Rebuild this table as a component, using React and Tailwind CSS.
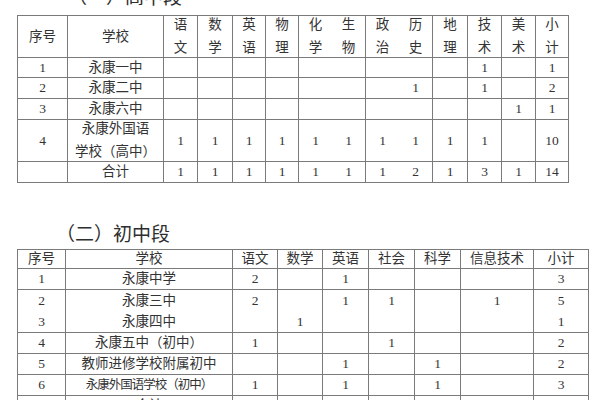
import React from 'react';

const T1_WIDTHS = [50, 96, 34, 35, 33, 33, 33, 34, 33, 34, 35, 34, 34, 33];
const T1_SUBJECTS = [
  ['语', '文'], ['数', '学'], ['英', '语'], ['物', '理'], ['化', '学'], ['生', '物'],
  ['政', '治'], ['历', '史'], ['地', '理'], ['技', '术'], ['美', '术'], ['小', '计'],
];
// columns whose right line is missing in the scan (化学|生物, 政治|历史)
const T1_OPEN = [6, 8];

const T1_ROWS = [
  { no: '1', school: ['永康一中'], h: 'h-[20px]', vals: ['', '', '', '', '', '', '', '', '', '1', '', '1'] },
  { no: '2', school: ['永康二中'], h: 'h-[21px]', vals: ['', '', '', '', '', '', '', '1', '', '1', '', '2'] },
  { no: '3', school: ['永康六中'], h: 'h-[21px]', vals: ['', '', '', '', '', '', '', '', '', '', '1', '1'] },
  { no: '4', school: ['永康外国语', '学校（高中）'], h: 'h-[41px]', vals: ['1', '1', '1', '1', '1', '1', '1', '1', '1', '1', '', '10'] },
  { no: '', school: ['合计'], h: 'h-[21px]', vals: ['1', '1', '1', '1', '1', '1', '1', '2', '1', '3', '1', '14'] },
];

const T2_WIDTHS = [48, 167, 45, 45, 46, 46, 46, 73, 55];
const T2_HEAD = ['序号', '学校', '语文', '数学', '英语', '社会', '科学', '信息技术', '小计'];
const T2_ROWS = [
  { no: '1', school: '永康中学', h: 'h-[21px]', vals: ['2', '', '1', '', '', '', '3'] },
  { no: '2', school: '永康三中', h: 'h-[22px]', open: true, vals: ['2', '', '1', '1', '', '1', '5'] },
  { no: '3', school: '永康四中', h: 'h-[21px]', vals: ['', '1', '', '', '', '', '1'] },
  { no: '4', school: '永康五中（初中）', h: 'h-[21px]', vals: ['1', '', '', '1', '', '', '2'] },
  { no: '5', school: '教师进修学校附属初中', h: 'h-[21px]', vals: ['', '', '1', '', '1', '', '2'] },
  { no: '6', school: '永康外国语学校（初中）', h: 'h-[21px]', tight: true, vals: ['1', '', '1', '', '1', '', '3'] },
  { no: '', school: '合计', h: 'h-[21px]', vals: ['6', '1', '4', '2', '2', '1', '16'] },
];

const cell = 'p-0 text-center align-middle border-b border-r border-[#7a7a7a]';

function Stack({ lines }) {
  return (
    <div className="flex flex-col items-center gap-[5px] leading-[18px]">
      {lines.map((s, i) => (
        <span key={i}>{s}</span>
      ))}
    </div>
  );
}

function HighSchoolTable() {
  return (
    <table className="table-fixed border-separate border-spacing-0 w-[552px] border-t border-l border-[#7a7a7a]">
      <colgroup>
        {T1_WIDTHS.map((w, i) => (
          <col key={i} style={{ width: w }} />
        ))}
      </colgroup>
      <tbody>
        <tr className="h-[42px]">
          <td className={cell}>序号</td>
          <td className={cell}>学校</td>
          {T1_SUBJECTS.map((s, i) => (
            <td key={i} className={`${cell} ${T1_OPEN.includes(i + 2) ? 'border-r-0' : ''}`}>
              <Stack lines={s} />
            </td>
          ))}
        </tr>
        {T1_ROWS.map((r, ri) => (
          <tr key={ri} className={r.h}>
            <td className={cell}>{r.no}</td>
            <td className={cell}>
              {r.school.length > 1 ? <Stack lines={r.school} /> : r.school[0]}
            </td>
            {r.vals.map((v, i) => (
              <td key={i} className={`${cell} ${T1_OPEN.includes(i + 2) ? 'border-r-0' : ''}`}>
                {v}
              </td>
            ))}
          </tr>
        ))}
      </tbody>
    </table>
  );
}

function JuniorTable() {
  return (
    <table className="table-fixed border-separate border-spacing-0 w-[572px] border-t border-l border-[#7a7a7a]">
      <colgroup>
        {T2_WIDTHS.map((w, i) => (
          <col key={i} style={{ width: w }} />
        ))}
      </colgroup>
      <tbody>
        <tr className="h-[19px]">
          {T2_HEAD.map((h) => (
            <td key={h} className={cell}>
              {h}
            </td>
          ))}
        </tr>
        {T2_ROWS.map((r, ri) => (
          <tr key={ri} className={r.h}>
            <td className={`${cell} ${r.open ? 'border-b-0' : ''}`}>{r.no}</td>
            <td className={`${cell} ${r.open ? 'border-b-0' : ''} ${r.tight ? 'text-[12.5px] tracking-[-1px]' : ''}`}>
              {r.school}
            </td>
            {r.vals.map((v, i) => (
              <td key={i} className={`${cell} ${r.open ? 'border-b-0' : ''}`}>
                {v}
              </td>
            ))}
          </tr>
        ))}
      </tbody>
    </table>
  );
}

export default function App() {
  return (
    <div className="w-[600px] h-[400px] overflow-hidden bg-white text-[#333] text-[13.5px] leading-none font-['Liberation_Serif','Noto_Sans_CJK_SC',serif]">
      <div className="-mt-[12px] pl-[68px] text-[19px] leading-[20px] text-[#2e2e2e]">（一）高中段</div>
      <div className="mt-[7px] pl-[17px]">
        <HighSchoolTable />
      </div>
      <div className="mt-[42px] pl-[56px] text-[19px] leading-[20px] text-[#2e2e2e]">（二）初中段</div>
      <div className="mt-[4px] pl-[17px]">
        <JuniorTable />
      </div>
    </div>
  );
}
